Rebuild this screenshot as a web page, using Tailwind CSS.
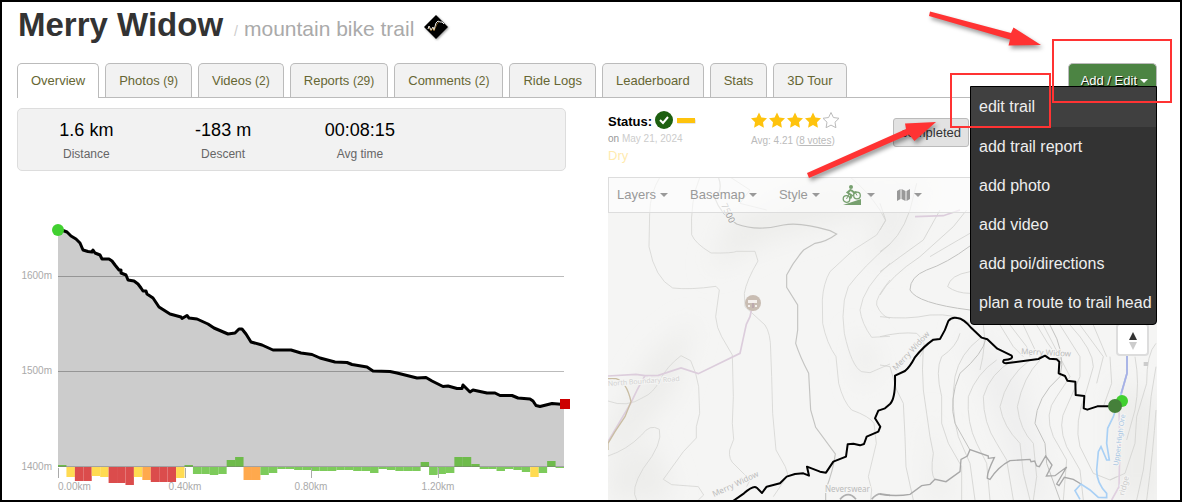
<!DOCTYPE html>
<html lang="en">
<head>
  <meta charset="UTF-8">
  <meta name="viewport" content="width=device-width, initial-scale=1.0">
  <title>Merry Widow mountain bike trail</title>
  <script src="https://cdn.jsdelivr.net/npm/@tailwindcss/browser@4"></script>
</head>
<body class="relative min-h-screen border-2 border-black bg-white pl-[15px] pr-[23px] font-['Liberation_Sans',Arial,sans-serif] text-[13px] text-[#333]">

  <!-- Title -->
  <header class="flex items-baseline pt-[3px] pl-px">
    <h1 class="text-[33px] leading-10 font-bold">Merry Widow</h1>
    <p class="ml-[11px] text-[21px] text-[#aaa]"><span class="mr-[6px] text-sm text-[#ccc]">/</span>mountain bike trail</p>
    <svg class="mt-1 ml-[10px] h-6 w-6 self-center drop-shadow-[1px_1px_1px_#999]" viewBox="0 0 24 24">
      <path d="M12 0 24 12 12 24 0 12z" fill="#000"/>
      <path d="M4 14l1-3 2 4 2-3 1 3 2-7 2-2 2 1 2 0 2 2" fill="none" stroke="#eee" stroke-width="1"/>
      <path d="M5 12l2 4 2-3 1 3 3-7 2-2" fill="none" stroke="#e0a94a" stroke-width=".5"/>
    </svg>
  </header>

  <!-- Tabs -->
  <nav class="relative mt-[18px] flex h-[35px] items-stretch gap-[6px] border-b border-[#bbb] leading-[34px] text-[#663]">
    <a href="#" class="-mb-px rounded-t-[5px] border border-b-0 border-[#bbb] bg-white px-[13px]">Overview</a>
    <a href="#" class="rounded-t-[5px] border border-b-0 border-[#bbb] bg-[#f2f2f2] px-[13px]">Photos <span class="text-xs leading-none">(9)</span></a>
    <a href="#" class="rounded-t-[5px] border border-b-0 border-[#bbb] bg-[#f2f2f2] px-[13px]">Videos <span class="text-xs leading-none">(2)</span></a>
    <a href="#" class="rounded-t-[5px] border border-b-0 border-[#bbb] bg-[#f2f2f2] px-[13px]">Reports <span class="text-xs leading-none">(29)</span></a>
    <a href="#" class="rounded-t-[5px] border border-b-0 border-[#bbb] bg-[#f2f2f2] px-[13px]">Comments <span class="text-xs leading-none">(2)</span></a>
    <a href="#" class="rounded-t-[5px] border border-b-0 border-[#bbb] bg-[#f2f2f2] px-[13px]">Ride Logs</a>
    <a href="#" class="rounded-t-[5px] border border-b-0 border-[#bbb] bg-[#f2f2f2] px-[13px]">Leaderboard</a>
    <a href="#" class="rounded-t-[5px] border border-b-0 border-[#bbb] bg-[#f2f2f2] px-[13px]">Stats</a>
    <a href="#" class="rounded-t-[5px] border border-b-0 border-[#bbb] bg-[#f2f2f2] px-[13px]">3D Tour</a>
    <div class="relative ml-auto">
      <button class="flex h-full items-center gap-[3px] rounded-t-[5px] border border-b-0 border-[#bbb] bg-[#4c8443] pr-2 pl-3 text-white [text-shadow:1px_1px_1px_#000]">
        Add / Edit
        <svg class="h-1 w-2" viewBox="0 0 8 4"><path d="M0 0h8L4 4z" fill="#fff"/></svg>
      </button>
      <!-- Open menu -->
      <ul class="absolute top-[23px] right-0 z-10 w-[187px] rounded-b-[4px] border border-black bg-[#333] text-base leading-[39px] whitespace-nowrap text-[#eee]">
        <li class="h-10 bg-[#404040]"><a href="#" class="block px-2">edit trail</a></li>
        <li><a href="#" class="block px-2">add trail report</a></li>
        <li><a href="#" class="block px-2">add photo</a></li>
        <li><a href="#" class="block px-2">add video</a></li>
        <li><a href="#" class="block px-2">add poi/directions</a></li>
        <li class="pb-[2px]"><a href="#" class="block px-2">plan a route to trail head</a></li>
      </ul>
    </div>
  </nav>

  <main class="mt-[10px] grid grid-cols-2 gap-[42px]">
    <!-- Stats and elevation -->
    <section>
      <dl class="grid h-[63px] grid-cols-4 rounded-[5px] border border-[#ddd] bg-[#f2f2f2] pt-[9px] text-center text-xs text-[#666]">
        <div class="flex flex-col-reverse justify-end gap-1"><dt>Distance</dt><dd class="text-lg leading-6 text-black">1.6 km</dd></div>
        <div class="flex flex-col-reverse justify-end gap-1"><dt>Descent</dt><dd class="text-lg leading-6 text-black">-183 m</dd></div>
        <div class="flex flex-col-reverse justify-end gap-1"><dt>Avg time</dt><dd class="text-lg leading-6 text-black">00:08:15</dd></div>
      </dl>
      <svg class="block w-full overflow-visible text-[10px]" viewBox="17 171 549 329" role="img" aria-label="Elevation profile">
        <path d="M58 276.500H564M58 371.500H564" stroke="#bbb"/>
        <path d="M58 467V230L63 230.500 67 232 71 236 76 239 80 243 83 250 88 251.500 92 252 93 250 95 253 100 255 102 259 109 259 112 261 115 265 119 270 121 270 121 273 126 275 128 280 134 281 138 284 141 288 143 291 146 291 147 294 153 298 159 307 170 314 181 317 182 318.500 187 315.500 189 318 197 319 208 324 214 328 228 334 235 333 239 329 242 329 246 334 251 342 262 345 273 350 291 350 301 353 312 354.500 320 358 335 362 347 362.500 352 364.500 367 367 373 371 390 371.500 397 373 417 378 426 377.500 432 381 443 386.500 448 386 457 388.500 462 388.500 463 385 470 392 473 390 487 393 495 393 500 395.500 512 395.500 518 398 530 399 533 401 536 405.500 540 406.500 552 403.500 564 404.500V467z" fill="#000" fill-opacity=".2"/>
        <path d="M58 230L63 230.500 67 232 71 236 76 239 80 243 83 250 88 251.500 92 252 93 250 95 253 100 255 102 259 109 259 112 261 115 265 119 270 121 270 121 273 126 275 128 280 134 281 138 284 141 288 143 291 146 291 147 294 153 298 159 307 170 314 181 317 182 318.500 187 315.500 189 318 197 319 208 324 214 328 228 334 235 333 239 329 242 329 246 334 251 342 262 345 273 350 291 350 301 353 312 354.500 320 358 335 362 347 362.500 352 364.500 367 367 373 371 390 371.500 397 373 417 378 426 377.500 432 381 443 386.500 448 386 457 388.500 462 388.500 463 385 470 392 473 390 487 393 495 393 500 395.500 512 395.500 518 398 530 399 533 401 536 405.500 540 406.500 552 403.500 564 404.500" fill="none" stroke="#000" stroke-width="3" stroke-linejoin="round"/>
        <circle cx="58" cy="230" r="6" fill="#41d030"/>
        <path d="M560 399h10v10h-10z" fill="#c00"/>
        <g id="grade"></g>
        <path d="M58 466.500H564" stroke="#777" stroke-opacity=".5"/>
        <path d="M58.500 468v10M185.500 468v10M311.500 468v10M438.500 468v10" stroke="#aaa"/>
        <g fill="#aaa">
          <text x="52" y="279" text-anchor="end">1600m</text>
          <text x="52" y="374" text-anchor="end">1500m</text>
          <text x="52" y="470" text-anchor="end">1400m</text>
          <text x="58" y="490">0.00km</text>
          <text x="185" y="490" text-anchor="middle">0.40km</text>
          <text x="311" y="490" text-anchor="middle">0.80km</text>
          <text x="438" y="490" text-anchor="middle">1.20km</text>
        </g>
      </svg>
    </section>

    <!-- Status and map -->
    <section class="flex flex-col">
      <div class="grid h-[69px] grid-cols-[143px_142px_auto] items-start justify-start">
        <div>
          <div class="flex h-[23px] items-center gap-[3px]">
            <b class="pt-[5px] text-black">Status:</b>
            <svg class="h-[18px] w-[42px]" viewBox="0 0 42 18" role="img" aria-label="Open, dry">
              <circle cx="9" cy="9" r="9" fill="#1d6010"/>
              <path d="M5 9l3 3 5-6" fill="none" stroke="#fff" stroke-width="2"/>
              <path d="M22.500 8.500h18v4h-18z" fill="#ccc"/>
              <path d="M22 7h18v5H22z" fill="#fec30d"/>
            </svg>
          </div>
          <p class="mt-px text-[10px] leading-[14px] text-[#ccc]"><span class="text-[#999]">on</span> May 21, 2024</p>
          <p class="leading-5 text-[#ffebb0]">Dry</p>
        </div>
        <div>
          <svg class="mt-1 h-[17px] w-[88px]" viewBox="0 0 88 17" role="img" aria-label="4.21 of 5 stars">
            <defs><path id="star" d="M8 0.500l2.400 5 5.600.8-4 3.900.9 5.500L8 13.100l-4.900 2.600.9-5.500-4-3.900 5.600-.8z"/></defs>
            <g fill="#fec30d"><use href="#star"/><use href="#star" x="18"/><use href="#star" x="36"/><use href="#star" x="54"/></g>
            <use href="#star" x="72" fill="#fff" stroke="#bbb"/>
          </svg>
          <p class="mt-1 text-[10px] leading-4 text-[#bbb]">Avg: 4.21 (<a href="#" class="underline">8 votes</a>)</p>
        </div>
        <button class="mt-[10px] h-[29px] rounded-[3px] border border-[#bbb] bg-[#e2e2e2] px-[7px]">completed</button>
      </div>

      <div class="relative flex-1 overflow-hidden bg-[#f5f5f4]">
        <svg class="absolute inset-0 h-full w-full" viewBox="608 177 549 323" preserveAspectRatio="xMinYMin slice" role="img" aria-label="Trail map">
          <defs>
            <filter id="soft" x="-50%" y="-50%" width="200%" height="200%"><feGaussianBlur stdDeviation="12"/></filter>
          </defs>
          <!-- Hill shading -->
          <g filter="url(#soft)" fill="#ededeb">
            <path d="M710 270l60-30 90-25 30-35h-70l-90 40z"/>
            <path d="M655 350l40-30-20 70-45 55-22 20v-40z"/>
            <path d="M608 470l45-30 20 50-10 10h-55z"/>
            <path d="M870 180l60 0-30 80-30 0z" fill="#efefee"/>
            <path d="M855 330l25 30-20 30z"/>
            <path d="M960 330l60 40 30 130h-25l-30-90z" fill="#eee"/>
            <path d="M1115 380l45 20v100h-45z"/>
            <path d="M930 410l20 90h-20z"/>
          </g>
          <!-- Contours, west sheet -->
          <g transform="translate(600 210) scale(.33333)" fill="none" stroke="#d6d6d4" stroke-width="2.500">
            <path d="M180-99Q150-50 149 10L147 110Q165 205 218 234Q270 240 348 229L358 240 347 320Q350 355 365 380L397 435 400 560 397 640 401 688 389 720Q385 750 405 765L450 810 440 830"/>
            <path d="M300-99Q270-30 275 74Q285 100 333 129Q400 130 410 124L465 124 474 153Q440 210 433 250L435 290 495 345Q512 370 512 420L515 500 518 610 528 720 556 770 564 795 520 860"/>
            <path d="M667 270Q670 220 690 185L760 120 830 75 857 32 840 0Q800-60 750-99M667 270L668 340Q680 400 708 440L716 520Q730 575 755 600Q810 620 822 640L829 700 805 800 815 840 812 870"/>
            <path d="M870 102Q790 170 745 230L733 270Q725 320 733 370Q755 470 785 485L810 488 870 462M870 160Q790 230 780 300Q785 340 815 382L870 379M870 210Q825 265 830 285Q845 320 870 325"/>
            <path d="M24 573Q80 595 130 562Q160 550 180 510 200 470 243 437L272 452Q290 490 296 530L299 610 289 650V684L250 725 190 808 215 824 295 830 311 855 295 870"/>
            <path d="M24 738Q80 720 125 675 150 640 178 658 190 700 130 775 90 840 110 870M390-99L450-60 420-20 500 0"/>
            <path d="M355-99Q370-60 345-35 360 10 410 42 470 65 550 45 600 35 690 62L710 72Q680 95 645 100L611 120Q580 155 560 195L560 232 593 285V360L587 400Q600 440 626 490L632 600 647 652 706 732Q700 780 677 840V870" stroke="#c4c4c2" stroke-width="3.500"/>
            <path d="M24 498L108 493 135 497 175 496 243 474 295 491 420 430 433 370 439 343 450 320 457 288M135 497Q110 540 92 580L24 695" stroke="#dccddc" stroke-width="5"/>
            <path d="M24 506H48Q80 515 93 575L75 620 45 665 24 700V720" stroke="#c9bda2" stroke-width="4"/>
            <path d="M720 868Q745 840 768 868M815 868Q830 850 845 852L870 856" stroke="#b0b0b0" stroke-width="5"/>
          </g>
          <!-- Contours, east sheet -->
          <g transform="translate(880 210) scale(.33333)" fill="none" stroke="#d2d2d0" stroke-width="2.500">
            <path d="M0-20L17 30 0 60M0 125Q60 90 90 0L110-80M0 185Q60 140 130 90L180 0M0 255Q30 200 120 140L220 50 260 0M270 70Q200 110 150 140"/>
            <path d="M270 185Q210 195 203 230 230 250 270 250M0 320Q80 330 150 315 230 310 270 340M0 380Q60 365 110 370 150 400 120 440M0 465L30 470 50 540 70 580 75 680 78 770 100 870"/>
            <path d="M130 410Q125 480 130 540L150 680 160 730Q150 790 165 810M240 370Q230 410 185 440 165 480 185 560L185 640 205 700 245 770V870M300 385Q240 430 225 500 210 590 235 680L270 760 285 870"/>
            <path d="M350 450Q290 490 265 560 260 640 290 700L320 760 330 870M400 450Q330 490 310 560 310 640 350 700L380 750 400 870M450 450Q380 500 360 590 370 650 420 700L430 790 450 870M480 450Q430 500 412 590 420 660 460 700L470 800 460 870"/>
            <path d="M310 345Q320 400 300 480M360 345L400 410 430 440M390 345L440 410 450 440M430 345L470 430M470 345Q500 400 540 450M490 345L570 500 530 560Q490 610 520 680L560 750 550 870M540 345L600 440 600 500 560 590Q530 640 560 710L600 780 610 870M570 345Q640 420 640 470L620 540Q580 640 600 710L640 790 690 810 710 800M600 345L670 440 650 520M640 345L680 440"/>
            <path d="M828 400Q800 430 800 520L770 620 765 700 735 790 690 810M828 470Q810 560 805 650L790 780 770 870M765 440Q780 520 765 600L740 690M828 600Q820 720 800 870M690 440L695 520 670 590"/>
            <path d="M270 108Q200 160 140 180 90 200 90 240 110 280 270 300M318 385Q310 430 240 490 205 570 225 640L270 720 M510 345Q560 430 540 500 470 560 465 640L495 700 500 760 540 870" stroke="#c2c2c0" stroke-width="3"/>
            <path d="M105 20L190 17 240 0" stroke="#dccddc" stroke-width="5"/>
            <path d="M0 853Q50 860 90 853L125 827 150 823 165 808 198 815 240 785 243 748 262 738 270 719 325 738V745L343 743Q320 790 322 805L330 808Q355 770 390 752L450 748 453 755 464 753 470 768 478 770 497 738 516 765 499 798 525 797 560 771 530 822 537 827 553 802 580 808 603 822" stroke="#a8a8a8" stroke-width="4"/>
            <path d="M741 425V490L722 560 717 600 720 700 717 830 695 870" stroke="#e0d0e0" stroke-width="5"/>
            <path d="M741 425V490L722 555 700 620 683 655 680 700 688 750 680 750 663 710 655 725 650 780Q650 820 680 850V863L655 862 630 840 603 822 585 842 600 868" stroke="#a9d0f5" stroke-width="5"/>
            <path d="M741 425V490L724 550" stroke="#a8b0e4" stroke-width="5"/>
            <path d="M791 456h13v12h-13z" fill="#ccc" stroke="none"/>
          </g>
          <g class="font-['Noto_Sans',sans-serif] text-[8px]" fill="#bbb" stroke="#f5f5f4" stroke-width="2" paint-order="stroke">
            <text transform="translate(608 386) rotate(-4)" fill="#d2d2d2" class="text-[7px]">North Boundary Road</text>
            <text transform="translate(896 371) rotate(-47)">Merry Widow</text>
            <text transform="translate(1021 354) rotate(3)">Merry Widow</text>
            <text transform="translate(714 497) rotate(-25)">Merry Widow</text>
            <text x="825" y="492">Neverswear</text>
            <text transform="translate(1118 466) rotate(-82)" fill="#a9c6e2" class="text-[7px]">Upper High Ore</text>
            <text transform="translate(1124 496) rotate(-75)" fill="#ccc">ridge</text>
            <text transform="translate(721 205) rotate(65)" fill="#999" class="text-[9px]">7500</text>
          </g>
          <!-- Trail -->
          <path transform="translate(880 210) scale(.33333)" d="M-445 876L-408 850Q-380 825-370 833L-354 849-340 830-300 820-280 800-255 792-230 790-213 797-219 770-180 785-162 788-140 755-102 740-97 703-80 701-60 706-48 702-40 680-5 665 1 650-15 625-5 602 15 595 30 582Q47 565 45 497L75 483Q90 470 104 443 130 410 160 389L180 387Q197 360 205 333 215 320 232 324 250 325 275 355L305 383 322 388 352 416 395 437Q402 448 372 450 365 458 378 460L475 447 495 437 508 446 530 448 538 455 536 490 555 498 562 512 586 515 587 555 613 558 611 595 622 599 652 589H700" fill="none" stroke="#000" stroke-width="6" stroke-linejoin="round"/>
          <circle cx="1122" cy="401" r="6" fill="#41d030"/>
          <circle cx="1115" cy="406" r="7" fill="#45803a"/>
          <circle cx="753" cy="303" r="8" fill="#c9bdb3"/>
          <path d="M748 300h9v3h-9zM748 305h2v2h-2zM755 305h2v2h-2z" fill="#f5f0ee"/>
          <path d="M753 303v5" stroke="#bda9ae" stroke-width="2"/>
        </svg>

        <!-- Map toolbar -->
        <div class="relative flex h-9 items-center border border-[#ddd] bg-white/60 pl-2 text-[#999]">
          <button class="mr-[22px] flex items-center gap-1">Layers <svg class="mb-px h-1 w-2" viewBox="0 0 8 4"><path d="M0 0h8L4 4z" fill="#999"/></svg></button>
          <button class="mr-[22px] flex items-center gap-1">Basemap <svg class="mb-px h-1 w-2" viewBox="0 0 8 4"><path d="M0 0h8L4 4z" fill="#999"/></svg></button>
          <button class="mr-[22px] flex items-center gap-1">Style <svg class="mb-px h-1 w-2" viewBox="0 0 8 4"><path d="M0 0h8L4 4z" fill="#999"/></svg></button>
          <button class="mr-[22px] flex items-center gap-[5px]" aria-label="Activity">
            <svg class="h-5 w-5" viewBox="0 0 20 20" fill="none" stroke="#77a06f">
              <path d="M1 20l18-6v6z" fill="#77a06f" stroke="none"/>
              <circle cx="4.500" cy="14" r="3.300" stroke-width="1.300"/>
              <circle cx="15" cy="10.500" r="3.300" stroke-width="1.300"/>
              <circle cx="9" cy="2" r="2" fill="#77a06f" stroke="none"/>
              <path d="M9 4.500L5.500 7.500 9 10 8.500 13.500M9 5l3 2.500 2.500-.5" stroke-width="2"/>
              <path d="M4.500 14L7 9M8.500 13.500L13 7l2 3.500" stroke-width="1"/>
            </svg>
            <svg class="mb-px h-1 w-2" viewBox="0 0 8 4"><path d="M0 0h8L4 4z" fill="#999"/></svg>
          </button>
          <button class="flex items-center gap-1" aria-label="Map view">
            <svg class="h-3 w-[13px]" viewBox="0 0 13 12" fill="#999"><path d="M0 2l3.500-2v10L0 12zM4.500 0l4 2v10l-4-2zM9.500 2L13 0v10l-3.500 2z"/></svg>
            <svg class="mb-px h-1 w-2" viewBox="0 0 8 4"><path d="M0 0h8L4 4z" fill="#999"/></svg>
          </button>
        </div>

        <!-- Compass -->
        <button class="absolute top-[146px] right-2 flex h-[33px] w-[33px] items-end justify-center rounded-[4px] border-2 border-[#ddd] bg-white pb-1" aria-label="Reset north">
          <svg class="h-[18px] w-2" viewBox="0 0 8 18"><path d="M4 0l4 8H0z" fill="#333"/><path d="M4 18l4-8H0z" fill="#ccc"/></svg>
        </button>
      </div>
    </section>
  </main>

  <!-- Callouts -->
  <svg class="pointer-events-none absolute -top-[2px] right-[-2px] z-20 h-[200px] w-[400px] drop-shadow-[2px_3px_2px_#0006]" viewBox="782 0 400 200" fill="#f33">
    <path d="M930 11.500L1011 33 1013.500 27.500 1041 45 1008.500 45.500 1010 39.500 929 16z"/>
    <path d="M807 173L906 129 905 123.500 936 122 914.500 141 909 134.500 809 178z"/>
  </svg>
  <svg class="pointer-events-none absolute -top-[2px] right-[-2px] z-20 h-[200px] w-[400px]" viewBox="782 0 400 200" fill="none" stroke="#f33" stroke-width="2">
    <path d="M1053 40h118v62h-118zM951 74h99v53h-99z"/>
  </svg>

  <script>
    // grade per segment in px from the baseline, negative is downhill
    const grades = [1, -9, -13, -13, -8, -9, -15, -15, -17, -9, -12, -14, -14, -14, -10, 1, -6, -6, -7, -6,
      6, 9, -12, -12, -7, -5, -1, -1, -2, -2, -3, -3, -3, -2, -2, -3, -3, -5, -1, -2,
      -3, -3, -3, 4, -7, -6, -5, 9, 9, 2, -1, -1, -3, -1, -2, -4, -9, -5, 5, 0];

    function gradeColor(g) {
      if (g > 0) return '#6ebb4b';
      if (g > -8) return '#7dcb5b';
      if (g > -11) return '#ffdb52';
      if (g > -13) return '#ffa94d';
      return '#db4c4c';
    }

    const step = 506 / grades.length;
    document.getElementById('grade').innerHTML = grades.map((g, i) =>
      `<rect x="${58 + i * step}" y="${g > 0 ? 466 - g : 467}" width="${step}" height="${Math.abs(g) + 1}" fill="${gradeColor(g)}"/>`
    ).join('');
  </script>
</body>
</html>
